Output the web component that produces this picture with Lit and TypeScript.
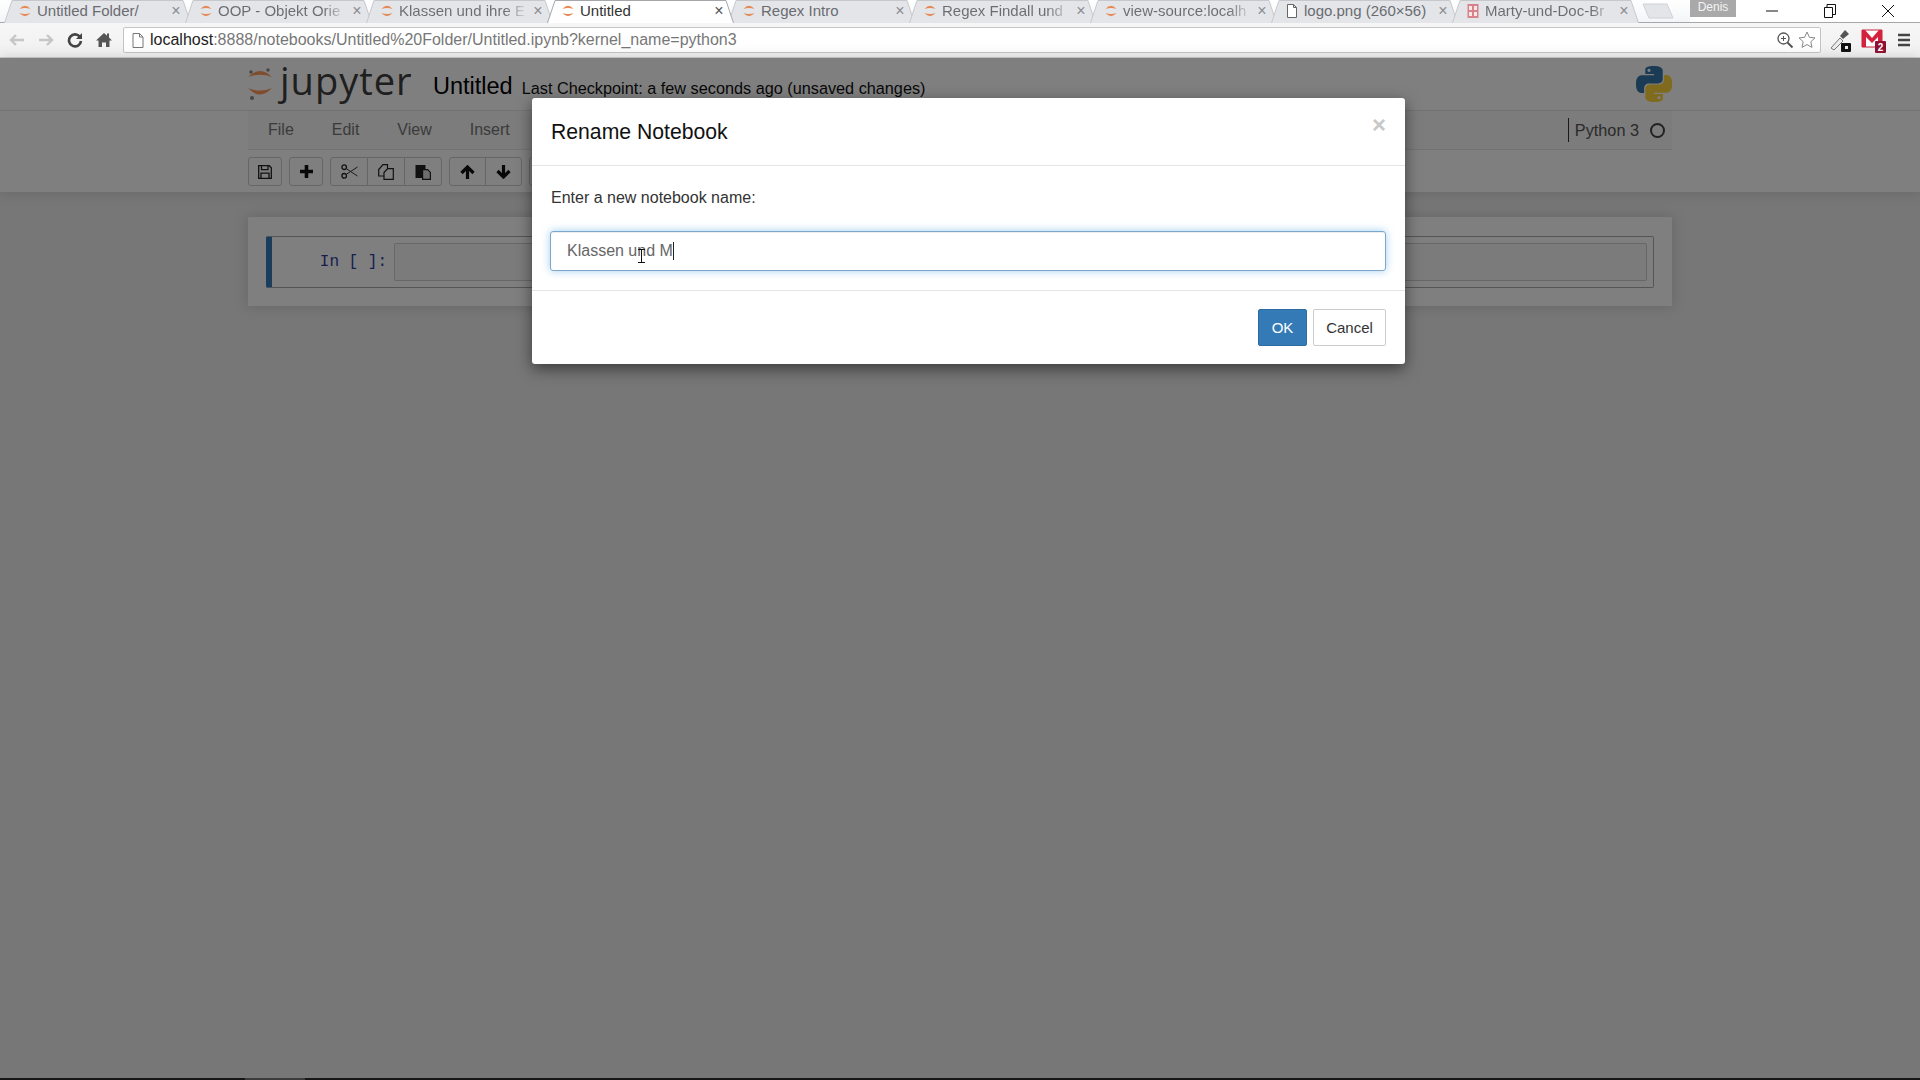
import { LitElement, css, html, svg } from 'lit'
import { customElement } from 'lit/decorators.js'

// titles are cut where the browser's tab fade cuts them
const TABS = [
  { title: 'Untitled Folder/', icon: 'jup' },
  { title: 'OOP - Objekt Orie', icon: 'jup', fade: true },
  { title: 'Klassen und ihre E', icon: 'jup', fade: true },
  { title: 'Untitled', icon: 'jup', active: true },
  { title: 'Regex Intro', icon: 'jup' },
  { title: 'Regex Findall und', icon: 'jup', fade: true },
  { title: 'view-source:localh', icon: 'jup', fade: true },
  { title: 'logo.png (260×56)', icon: 'doc' },
  { title: 'Marty-und-Doc-Br', icon: 'pdf', fade: true },
]

const PY_BLUE = 'M14.25.18l.9.2.73.26.59.3.45.32.34.34.25.34.16.33.1.3.04.26.02.2-.01.13V8.5l-.05.63-.13.55-.21.46-.26.38-.3.31-.33.25-.35.19-.35.14-.33.1-.3.07-.26.04-.21.02H8.77l-.69.05-.59.14-.5.22-.41.27-.33.32-.27.35-.2.36-.15.37-.1.35-.07.32-.04.27-.02.21v3.06H3.17l-.21-.03-.28-.07-.32-.12-.35-.18-.36-.26-.36-.36-.35-.46-.32-.59-.28-.73-.21-.88-.14-1.05-.05-1.23.06-1.22.16-1.04.24-.87.32-.71.36-.57.4-.44.42-.33.42-.24.4-.16.36-.1.32-.05.24-.01h.16l.06.01h8.16v-.83H6.18l-.01-2.75-.02-.37.05-.34.11-.31.17-.28.25-.26.31-.23.38-.2.44-.18.51-.15.58-.12.64-.1.71-.06.77-.04.84-.02 1.27.05zm-6.3 1.98l-.23.33-.08.41.08.41.23.34.33.22.41.09.41-.09.33-.22.23-.34.08-.41-.08-.41-.23-.33-.33-.22-.41-.09-.41.09z'
const PY_YELLOW = 'M21.1 6.11l.28.06.32.12.35.18.36.27.36.35.35.47.32.59.28.73.21.88.14 1.04.05 1.23-.06 1.23-.16 1.04-.24.86-.32.71-.36.57-.4.45-.42.33-.42.24-.4.16-.36.09-.32.05-.24.02-.16-.01h-8.22v.82h5.84l.01 2.76.02.36-.05.34-.11.31-.17.29-.25.25-.31.24-.38.2-.44.17-.51.15-.58.13-.64.09-.71.07-.77.04-.84.01-1.27-.04-1.07-.14-.9-.2-.73-.25-.59-.3-.45-.33-.34-.34-.25-.34-.16-.33-.1-.3-.04-.25-.02-.2.01-.13v-5.34l.05-.64.13-.54.21-.46.26-.38.3-.32.33-.24.35-.2.35-.14.33-.1.3-.06.26-.04.21-.02.13-.01h5.84l.69-.05.59-.14.5-.21.41-.28.33-.32.27-.35.2-.36.15-.36.1-.35.07-.32.04-.28.02-.21V6.07h2.09l.14.01zm-6.47 14.25l-.23.33-.08.41.08.41.23.33.33.23.41.08.41-.08.33-.23.23-.33.08-.41-.08-.41-.23-.33-.33-.23-.41-.08-.41.08z'

const favicon = (kind: string) => {
  if (kind === 'doc') {
    return html`<svg class="fav" viewBox="0 0 14 14"><path d="M2.5 .5h6l3 3v10h-9z M8.5 .5v3h3" fill="#fff" stroke="#666"/></svg>`
  }
  if (kind === 'pdf') {
    return html`<svg class="fav" viewBox="0 0 14 14"><rect x="1.5" width="11" height="14" fill="#d8828c"/><path d="M3 2h3v4H3zM8 2h3v4H8zM3 8h3v4H3zM8 8h3v4H8z" fill="#fbe9ea"/></svg>`
  }
  return html`<svg class="fav" viewBox="0 0 14 14"><path d="M1.500 5Q7 -1.500 12.500 5Q7 2.800 1.500 5zM1.500 9Q7 15.500 12.500 9Q7 11.200 1.500 9z" fill="#e58a55"/></svg>`
}

const jupyterMark = svg`<path d="M0 9Q12 -3 24 9Q12 4.500 0 9zM0 20Q12 33 24 20Q12 25 0 20z" fill="#ff9a5c"/><circle cx="3" cy="4" r="1.700" fill="#8a8a8c"/><circle cx="20" cy="2" r="1.700" fill="#8a8a8c"/><circle cx="4" cy="30" r="2" fill="#8a8a8c"/>`

@customElement('app-root')
export class AppRoot extends LitElement {
  static styles = css`
    :host {
      display: flex;
      flex-direction: column;
      width: 1920px;
      height: 1080px;
      overflow: hidden;
      font-family: "Liberation Sans", Arial, sans-serif;
      color: #000;
      background: #eee;
    }
    .tabstrip {
      height: 22px;
      flex: none;
      display: flex;
      background: linear-gradient(#ffffff, #f4f5f7);
      border-bottom: 1px solid #a5a7aa;
      box-sizing: content-box;
      position: relative;
    }
    .tabs {
      display: flex;
      padding-left: 4px;
      flex: none;
    }
    .tab {
      position: relative;
      width: 187px;
      height: 23px;
      margin-right: -6px;
      display: flex;
      align-items: center;
      padding: 0 10px 2px 14px;
      box-sizing: border-box;
      font-size: 15px;
      color: #6a6c70;
      gap: 5px;
    }
    .tab.active {
      color: #333;
      z-index: 2;
    }
    .tab-bg {
      position: absolute;
      inset: 0;
      width: 100%;
      height: 100%;
    }
    .fav {
      position: relative;
      width: 14px;
      height: 14px;
      flex: none;
    }
    .tab-title {
      position: relative;
      flex: 1;
      min-width: 0;
      white-space: nowrap;
    }
    .tab-title.fade {
      color: transparent;
      background: linear-gradient(90deg, #6a6c70 82%, #e3e5e9);
      -webkit-background-clip: text;
      background-clip: text;
    }
    .tab-x {
      position: relative;
      flex: none;
      width: 10px;
      font-size: 16px;
      line-height: 16px;
      text-align: center;
      color: #8b8d91;
    }
    .tab.active .tab-x {
      color: #555;
    }
    .newtab {
      width: 32px;
      height: 16px;
      margin: 3px 0 0 9px;
      flex: none;
    }
    .winbar {
      margin-left: auto;
      display: flex;
      align-items: flex-start;
      background: #fff;
      padding-right: 3px;
    }
    .profile {
      width: 46px;
      height: 17px;
      background: #a9a9a9;
      color: #f4f4f4;
      font-size: 12px;
      line-height: 15px;
      text-align: center;
      margin-right: 7px;
    }
    .winbtn {
      width: 58px;
      height: 22px;
      display: flex;
      align-items: center;
      justify-content: center;
    }
    .addressbar {
      height: 35px;
      flex: none;
      display: flex;
      align-items: center;
      background: linear-gradient(#f6f6f6, #f1f1f1);
      border-bottom: 1px solid #c9c9c9;
      box-sizing: border-box;
      padding-left: 8px;
    }
    .nav {
      display: flex;
      align-items: center;
      gap: 11px;
      width: 115px;
      flex: none;
    }
    .omni {
      width: 1698px;
      height: 26px;
      flex: none;
      background: #fff;
      border: 1px solid #c4c4c4;
      border-radius: 2px;
      box-sizing: border-box;
      display: flex;
      align-items: center;
      padding: 0 4px 0 8px;
      font-size: 16px;
      color: #777;
      white-space: nowrap;
    }
    .omni b {
      font-weight: 400;
      color: #222;
    }
    .omni .url {
      margin-left: 6px;
      flex: 1;
    }
    .omni svg + svg {
      margin-left: 4px;
    }
    .ext {
      display: flex;
      align-items: center;
      padding-left: 7px;
      gap: 9px;
    }
    .page {
      position: relative;
      flex: 1;
      min-height: 0;
      display: flex;
      flex-direction: column;
    }
    .site-header {
      background: #fff;
      height: 134px;
      flex: none;
      box-shadow: 0 0 12px 1px rgba(87, 87, 87, 0.2);
      display: flex;
      flex-direction: column;
    }
    .title-row {
      height: 52px;
      flex: none;
      border-bottom: 1px solid #e7e7e7;
      padding: 0 250px 0 248px;
      display: flex;
      align-items: flex-end;
      box-sizing: content-box;
    }
    .logo {
      display: flex;
      align-items: center;
      align-self: stretch;
      width: 185px;
      flex: none;
    }
    .wordmark {
      font-family: "Open Sans", sans-serif;
      font-size: 38px;
      color: #3e3e3e;
      margin-left: 8px;
      line-height: 50px;
      letter-spacing: 1px;
      position: relative;
      top: -4px;
    }
    .nbname {
      font-size: 23.5px;
      line-height: 30px;
      margin-bottom: 9px;
      color: #000;
    }
    .checkpoint {
      font-size: 16.25px;
      line-height: 20px;
      margin: 0 0 12px 9px;
      color: #111;
      flex: 1;
    }
    .pylogo {
      align-self: flex-start;
      margin: 8px -2px 0 0;
    }
    .menubar {
      margin: 0 248px;
      height: 39px;
      flex: none;
      border-bottom: 1px solid #e7e7e7;
      background: #f8f8f8;
      display: flex;
      align-items: center;
      font-size: 16px;
      color: #777;
      box-sizing: border-box;
      padding-left: 1px;
    }
    .menu-item {
      padding: 0 19px;
    }
    .kernel {
      margin-left: auto;
      display: flex;
      align-items: center;
      color: #555;
      padding-right: 7px;
    }
    .kernel-name {
      border-left: 1px solid #333;
      padding-left: 6px;
      height: 24px;
      line-height: 24px;
      margin-right: 11px;
      font-size: 16.25px;
    }
    .kernel-dot {
      width: 15px;
      height: 15px;
      box-sizing: border-box;
      border: 2.5px solid #444;
      border-radius: 50%;
    }
    .toolbar {
      margin: 7px 248px 0;
      display: flex;
      gap: 7px;
    }
    .group {
      display: flex;
      height: 27px;
      border: 1px solid #ccc;
      border-radius: 3px;
      background: #fff;
      box-sizing: content-box;
    }
    .tb {
      width: 32px;
      display: flex;
      align-items: center;
      justify-content: center;
      border-left: 1px solid #ccc;
    }
    .tb:first-child {
      border-left: 0;
    }
    .g3 .tb {
      width: 36px;
    }
    .g2 .tb {
      width: 35px;
    }
    .site {
      flex: 1;
      padding: 25px 248px 0;
    }
    .container {
      background: #fff;
      height: 89px;
      padding: 19px 18px 18px;
      box-sizing: border-box;
      box-shadow: 0 0 12px 1px rgba(87, 87, 87, 0.2);
    }
    .cell {
      height: 52px;
      border: 1px solid #ababab;
      border-left: 6px solid #337ab7;
      border-radius: 2px;
      display: flex;
      align-items: center;
      box-sizing: border-box;
      padding: 0 6px 0 0;
    }
    .prompt {
      width: 122px;
      flex: none;
      text-align: right;
      padding-right: 7px;
      box-sizing: border-box;
      font-family: "Liberation Mono", monospace;
      font-size: 16px;
      color: #303f9f;
    }
    .input-area {
      flex: 1;
      height: 38px;
      border: 1px solid #cfcfcf;
      border-radius: 2px;
      background: #f7f7f7;
      box-sizing: border-box;
    }
    .strip {
      height: 2px;
      flex: none;
      background: #161616;
      padding-left: 245px;
    }
    .strip i {
      display: block;
      width: 60px;
      height: 2px;
      background: #3c3c3c;
    }
    .backdrop {
      position: absolute;
      inset: 0;
      background: rgba(0, 0, 0, 0.5);
      z-index: 5;
      padding: 40px 0 0 532px;
      box-sizing: border-box;
    }
    .modal {
      width: 873px;
      height: 266px;
      background: #fff;
      border-radius: 3px;
      box-shadow: 0 5px 15px rgba(0, 0, 0, 0.5);
      display: flex;
      flex-direction: column;
    }
    .modal-header {
      height: 68px;
      flex: none;
      border-bottom: 1px solid #e5e5e5;
      padding: 0 14px 0 19px;
      display: flex;
      align-items: center;
      justify-content: space-between;
      box-sizing: border-box;
    }
    .modal-title {
      font-size: 21.2px;
      color: #111;
    }
    .close {
      font-size: 24px;
      font-weight: 700;
      color: #c8c8c8;
      line-height: 24px;
      position: relative;
      top: -7px;
      right: 5px;
    }
    .modal-body {
      height: 125px;
      flex: none;
      padding: 22px 19px 0 18px;
      box-sizing: border-box;
      border-bottom: 1px solid #e5e5e5;
      font-size: 16px;
      color: #333;
    }
    .modal-body p {
      margin: 0 0 0 1px;
      line-height: 20px;
      height: 43px;
    }
    .field {
      position: relative;
      height: 40px;
      border: 1px solid #7ba7cc;
      border-radius: 3px;
      box-shadow: inset 0 1px 1px rgba(0, 0, 0, 0.075), 0 0 8px rgba(102, 175, 233, 0.6);
      display: flex;
      align-items: center;
      padding: 0 16px;
      box-sizing: border-box;
      color: #666;
    }
    .caret {
      width: 1px;
      height: 18px;
      background: #222;
    }
    .ibeam {
      position: absolute;
      left: 86px;
      top: 17px;
    }
    .modal-footer {
      flex: 1;
      display: flex;
      justify-content: flex-end;
      gap: 6px;
      padding: 18px 19px 0 0;
      box-sizing: border-box;
    }
    .btn {
      height: 37px;
      box-sizing: border-box;
      border-radius: 2px;
      font-size: 15px;
      line-height: 35px;
      text-align: center;
      border: 1px solid #ccc;
      color: #333;
    }
    .ok {
      width: 49px;
      background: #337ab7;
      border-color: #2e6da4;
      color: #fff;
    }
    .cancel {
      width: 73px;
    }
  `

  render() {
    return html`
      <div class="tabstrip">
        <div class="tabs">
          ${TABS.map(t => html`
            <div class="tab ${t.active ? 'active' : ''}">
              <svg class="tab-bg" viewBox="0 0 187 23" preserveAspectRatio="none">
                <path d="M0.500 23L8 .5H179L186.500 23" fill="${t.active ? '#fff' : '#e3e5e9'}" stroke="${t.active ? '#a5a7aa' : '#c6c8cc'}"/>
              </svg>
              ${favicon(t.icon)}
              <span class="tab-title ${t.fade ? 'fade' : ''}">${t.title}</span>
              <span class="tab-x">×</span>
            </div>
          `)}
        </div>
        <svg class="newtab" viewBox="0 0 32 16"><path d="M1 1H25L31 15H7z" fill="#e3e5e9" stroke="#cfd1d4"/></svg>
        <div class="winbar">
          <div class="profile">Denis</div>
          <div class="winbtn"><svg width="12" height="12"><path d="M0 6h12" stroke="#111"/></svg></div>
          <div class="winbtn"><svg width="12" height="14"><path d="M.5 3.500h8v10h-8zM3 3.500V.5h8.500v10H8.500" fill="none" stroke="#111"/></svg></div>
          <div class="winbtn"><svg width="14" height="14"><path d="M1 1l12 12M13 1L1 13" stroke="#111"/></svg></div>
        </div>
      </div>

      <div class="addressbar">
        <div class="nav">
          <svg width="18" height="16" viewBox="0 0 18 16"><path d="M16 8H3M8 3L3 8l5 5" fill="none" stroke="#c6c6c6" stroke-width="2.400"/></svg>
          <svg width="18" height="16" viewBox="0 0 18 16"><path d="M2 8h13M10 3l5 5-5 5" fill="none" stroke="#c6c6c6" stroke-width="2.400"/></svg>
          <svg width="18" height="16" viewBox="0 0 16 16"><path d="M13 5A6 6 0 1 0 14 9" fill="none" stroke="#444" stroke-width="2.600"/><path d="M15 1v6H9z" fill="#444"/></svg>
          <svg width="18" height="16" viewBox="0 0 16 16"><path d="M8 1L0 8.500h2.500V15H6v-4.500h4V15h3.500V8.500H16L13 5.600V1.500h-2v2.200z" fill="#555"/></svg>
        </div>
        <div class="omni">
          <svg width="12" height="15" viewBox="0 0 12 15"><path d="M1 .5h6.500l3.500 3.500v10.500H1zM7.500 .5V4H11" fill="#fff" stroke="#777"/></svg>
          <span class="url"><b>localhost</b>:8888/notebooks/Untitled%20Folder/Untitled.ipynb?kernel_name=python3</span>
          <svg width="18" height="18" viewBox="0 0 18 18"><circle cx="7.500" cy="7.500" r="5.500" fill="none" stroke="#555" stroke-width="1.300"/><path d="M11.500 11.500l5 5" stroke="#555" stroke-width="2"/><path d="M5 7.500h5M7.500 5v5" stroke="#555"/></svg>
          <svg width="18" height="18" viewBox="0 0 18 18"><path d="M9 1l2.400 5.300 5.600.600-4.200 3.800 1.200 5.700L9 13.500l-5 2.900 1.200-5.700L1 6.900l5.600-.600z" fill="#fff" stroke="#888"/></svg>
        </div>
        <div class="ext">
          <svg width="24" height="24" viewBox="0 0 24 24"><path d="M3 20l9-10 3 3-9 9z" fill="#eee" stroke="#777"/><path d="M12 8l5-6 4 4-6 5z" fill="#555"/><rect x="13" y="15" width="10" height="9" rx="1" fill="#111"/><rect x="17" y="18" width="3" height="3" fill="#eee"/></svg>
          <svg width="26" height="26" viewBox="0 0 26 26"><path d="M1 3h20v17H1z" fill="#fff" stroke="#c8203a"/><path d="M1 3h3l7 8 7-8h3v17h-4V10l-6 6-6-6v10H1z" fill="#d4213d"/><rect x="14" y="14" width="11" height="12" rx="1" fill="#8f1030"/><text x="19.500" y="24" font-size="10" font-weight="700" text-anchor="middle" fill="#fff" font-family="Liberation Sans">2</text></svg>
          <svg width="16" height="16" viewBox="0 0 16 16"><path d="M2 3h12M2 8h12M2 13h12" stroke="#444" stroke-width="2.600"/></svg>
        </div>
      </div>

      <div class="page">
        <div class="site-header">
          <div class="title-row">
            <div class="logo">
              <svg width="24" height="33" viewBox="0 0 24 33">${jupyterMark}</svg>
              <span class="wordmark">jupyter</span>
            </div>
            <span class="nbname">Untitled</span>
            <span class="checkpoint">Last Checkpoint: a few seconds ago (unsaved changes)</span>
            <svg class="pylogo" width="36" height="36" viewBox="0 0 24 24"><path d="${PY_BLUE}" fill="#3776ab"/><path d="${PY_YELLOW}" fill="#ffd43b"/></svg>
          </div>
          <div class="menubar">
            <span class="menu-item">File</span>
            <span class="menu-item">Edit</span>
            <span class="menu-item">View</span>
            <span class="menu-item">Insert</span>
            <div class="kernel">
              <span class="kernel-name">Python 3</span>
              <span class="kernel-dot"></span>
            </div>
          </div>
          <div class="toolbar">
            <div class="group">
              <div class="tb"><svg width="14" height="14" viewBox="0 0 14 14"><path d="M.7 .7h10.600l2 2v10.600H.7z M3.500 .7v4h6.500v-4 M3 13.300V8.200h8v5.100" fill="none" stroke="#222" stroke-width="1.300"/></svg></div>
            </div>
            <div class="group">
              <div class="tb"><svg width="13" height="13" viewBox="0 0 13 13"><path d="M6.500 0v13M0 6.500h13" stroke="#111" stroke-width="3.600"/></svg></div>
            </div>
            <div class="group g3">
              <div class="tb"><svg width="17" height="15" viewBox="0 0 17 15"><circle cx="3.200" cy="3.200" r="2.300" fill="none" stroke="#222" stroke-width="1.300"/><circle cx="3.200" cy="11.800" r="2.300" fill="none" stroke="#222" stroke-width="1.300"/><path d="M5 4.500L16.500 12M5 10.500L16.500 3" stroke="#333"/></svg></div>
              <div class="tb"><svg width="16" height="16" viewBox="0 0 16 16"><path d="M5 .7h4.500v4L6 8.500v3.500H.7V5.500zM9.500 4.700h5.800v10.600H6V8.500z" fill="none" stroke="#222" stroke-width="1.200"/></svg></div>
              <div class="tb"><svg width="16" height="16" viewBox="0 0 16 16"><path d="M.5 1h10v4H7v9H.5z" fill="#222"/><path d="M7.600 5.600h5l2.800 2.800v7H7.600z" fill="#ddd" stroke="#222" stroke-width="1.200"/></svg></div>
            </div>
            <div class="group g2">
              <div class="tb"><svg width="15" height="14" viewBox="0 0 15 14"><path d="M7.500 14V2M1.500 8l6-6 6 6" fill="none" stroke="#111" stroke-width="3.200"/></svg></div>
              <div class="tb"><svg width="15" height="14" viewBox="0 0 15 14"><path d="M7.500 0v12M1.500 6l6 6 6-6" fill="none" stroke="#111" stroke-width="3.200"/></svg></div>
            </div>
            <div class="group"><div class="tb"></div></div>
          </div>
        </div>
        <div class="site">
          <div class="container">
            <div class="cell">
              <div class="prompt">In [ ]:</div>
              <div class="input-area"></div>
            </div>
          </div>
        </div>

        <div class="backdrop">
          <div class="modal">
            <div class="modal-header">
              <span class="modal-title">Rename Notebook</span>
              <span class="close">×</span>
            </div>
            <div class="modal-body">
              <p>Enter a new notebook name:</p>
              <div class="field">
                <span>Klassen und M</span><span class="caret"></span>
                <svg class="ibeam" width="9" height="14" viewBox="0 0 9 14"><path d="M1 .5h7M4.500 .5v13M1 13.500h7" fill="none" stroke="#111"/></svg>
              </div>
            </div>
            <div class="modal-footer">
              <div class="btn ok">OK</div>
              <div class="btn cancel">Cancel</div>
            </div>
          </div>
        </div>
      </div>
      <div class="strip"><i></i></div>
    `
  }
}
